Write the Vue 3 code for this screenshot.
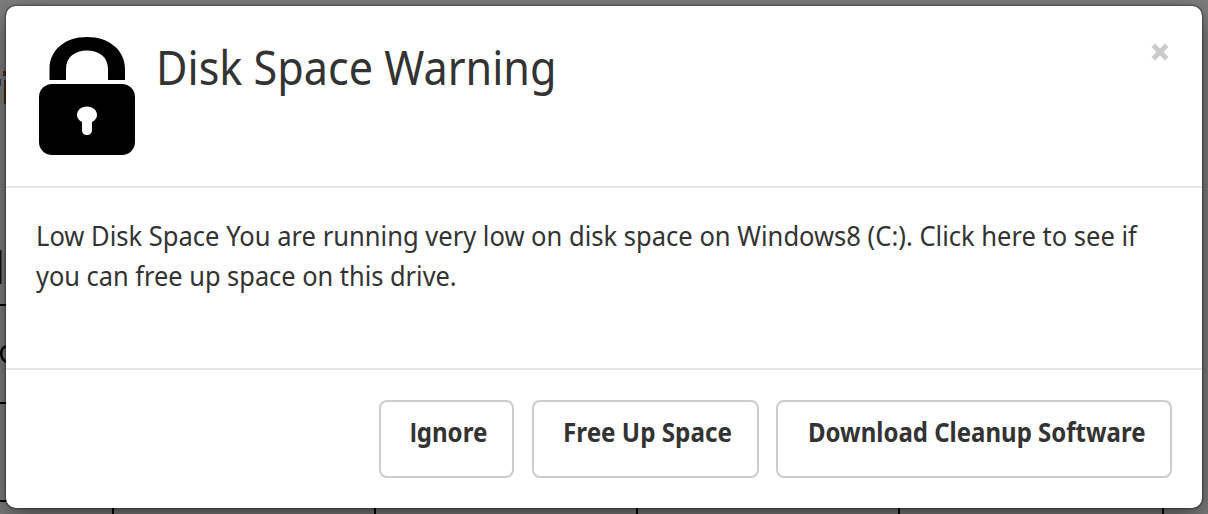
<script setup>
const actions = [
  { label: 'Ignore', kind: 'ignore' },
  { label: 'Free Up Space', kind: 'free' },
  { label: 'Download Cleanup Software', kind: 'download' },
]
</script>

<template>
  <main class="page">
    <svg class="underlay" width="1208" height="514" viewBox="0 0 1208 514" aria-hidden="true">
      <path d="M0 305H8M0 403H8M0 501H8M113 500V514M375 500V514M637 500V514M899 500V514M1163 500V514" stroke="#000" stroke-width="2" />
      <path d="M0 250H1.5V284H0Z" fill="#10151c" />
      <path d="M8 347C0 344-2 361 8 362" fill="none" stroke="#050505" stroke-width="2.5" />
      <path d="M4 80H8V104H4ZM3 71H8V76H3Z" fill="#5a2c12" />
      <path d="M0 79H1V86H0Z" fill="#253d58" />
    </svg>
    <section class="modal" role="dialog" aria-labelledby="title">
      <header class="head">
        <svg class="lock" width="98" height="120" viewBox="0 0 98 120" aria-hidden="true">
          <path d="M11.5 44V33C11.5 14 27 1 49 1S87 14 87 33V44H70V33C70 21 61 14.5 49 14.5S28 21 28 33V44Z" />
          <rect x="1" y="48" width="96" height="71" rx="13" />
          <path class="keyhole" d="M49 70.5C43 70.5 39 74.5 39 79C39 82 41 84.5 44 86V94C44 97 46 99 49 99S54 97 54 94V86C57 84.5 59 82 59 79C59 74.5 55 70.5 49 70.5Z" />
        </svg>
        <h1 id="title" class="title">Disk Space Warning</h1>
        <button class="close" aria-label="Close">
          <svg width="18" height="18" viewBox="0 0 18 18"><path d="M2.3 2.3L15.7 15.7M15.7 2.3L2.3 15.7" /></svg>
        </button>
      </header>
      <div class="body">
        <p class="line first">Low Disk Space You are running very low on disk space on Windows8 (C:). Click here to see if</p>
        <p class="line second">you can free up space on this drive.</p>
      </div>
      <footer class="foot">
        <button v-for="a in actions" :key="a.kind" class="btn" :class="a.kind"><span>{{ a.label }}</span></button>
      </footer>
    </section>
  </main>
</template>

<style>
body { margin: 0; overflow: hidden; }
</style>

<style scoped>
* { box-sizing: border-box; }
.page {
  position: relative;
  width: 1208px;
  height: 514px;
  padding: 6px;
  overflow: hidden;
  background: #7f7f7f;
  font-family: "Noto Sans", "Open Sans", sans-serif;
  color: #333;
}
.underlay { position: absolute; left: 0; top: 0; }
.modal {
  position: relative;
  width: 1196px;
  height: 502px;
  display: flex;
  flex-direction: column;
  background: #fff;
  border-radius: 10px;
  box-shadow: 0 0 0 1.5px rgba(0, 0, 0, 0.25), 0 10px 30px rgba(0, 0, 0, 0.5);
}
.head {
  height: 182px;
  display: flex;
  align-items: flex-start;
  padding: 30px 32px 0;
  border-bottom: 2px solid #e5e5e5;
}
.lock { flex: none; }
.keyhole { fill: #fff; }
.title {
  margin: -1px 0 0 20px;
  font-size: 47px;
  font-weight: 400;
  line-height: 64px;
  white-space: nowrap;
  transform: scaleX(0.918);
  transform-origin: left;
}
.close {
  margin: 6px 0 0 auto;
  width: 20px;
  height: 20px;
  padding: 1px;
  border: 0;
  background: none;
}
.close svg { display: block; }
.close path { stroke: #ccc; stroke-width: 5; }
.body {
  height: 182px;
  padding: 28px 30px;
  border-bottom: 2px solid #e5e5e5;
}
.line {
  margin: 0;
  width: max-content;
  font-size: 27px;
  line-height: 40px;
  white-space: nowrap;
  transform-origin: left;
}
.first { transform: scaleX(0.946); }
.second { transform: scaleX(0.94); }
.foot {
  display: flex;
  justify-content: flex-end;
  padding: 30px 30px 0;
}
.btn {
  height: 78px;
  padding: 10px 0 0 29px;
  display: flex;
  border: 2px solid #ccc;
  border-radius: 8px;
  background: #fff;
  color: #333;
  font: 700 27px/40px "Noto Sans", "Open Sans", sans-serif;
  text-align: left;
  white-space: nowrap;
}
.btn span { transform-origin: left; }
.ignore { width: 135px; margin-right: 18px; }
.ignore span { transform: scaleX(0.893); }
.ignore span::first-letter { font-family: "Liberation Sans", sans-serif; }
.free { width: 227px; margin-right: 17px; }
.free span { transform: scaleX(0.897); }
.download { width: 396px; }
.download span { margin-left: 1px; transform: scaleX(0.889); }
</style>
